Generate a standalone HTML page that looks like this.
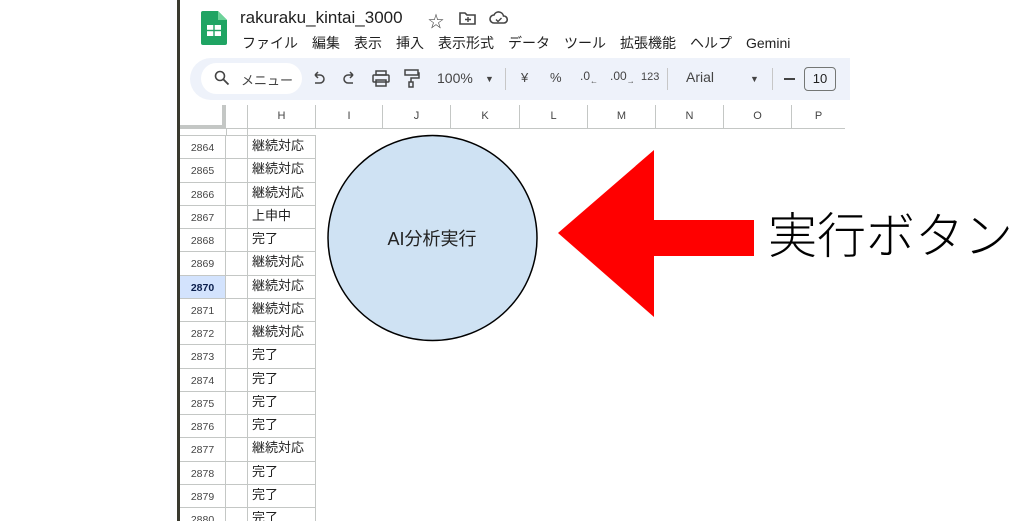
<!DOCTYPE html>
<html><head><meta charset="utf-8"><style>
*{margin:0;padding:0;box-sizing:border-box}
html,body{width:1024px;height:521px;overflow:hidden}
body{background:#fff;position:relative;font-family:"Liberation Sans","Noto Sans CJK JP",sans-serif;color:#1f1f1f}
.a{position:absolute;white-space:nowrap}
.menu span{margin-right:14px}
.tb span{position:absolute;font-size:13px;color:#444}
.colh{position:absolute;top:105px;height:23px;border-right:1px solid #c4c7c5;font-size:11px;color:#444;text-align:center;line-height:23px}
.row{position:absolute;left:180px;width:136px;height:23.3px;border-bottom:1px solid #c4c7c5}
.rn{position:absolute;left:0;width:46px;height:100%;border-right:1px solid #c4c7c5;font-size:10.5px;color:#444;text-align:center;line-height:24px}
.bl{position:absolute;left:46px;width:22px;height:100%;border-right:1px solid #c4c7c5}
.h{position:absolute;left:68px;width:68px;height:100%;border-right:1px solid #c4c7c5;font-size:13px;padding-left:4px;line-height:20px}
</style></head><body>
<div class="a" style="left:177px;top:0;width:3px;height:521px;background:#3a3a2e"></div>
<svg class="a" style="left:201px;top:11px" width="26" height="34" viewBox="0 0 26 34"><path d="M2 0h15l9 9v23a2 2 0 0 1-2 2H2a2 2 0 0 1-2-2V2a2 2 0 0 1 2-2z" fill="#1fa463"/><path d="M17 0v9h9z" fill="#6dd39a"/><rect x="6" y="14" width="14" height="11" fill="#fff"/><rect x="12.3" y="14" width="1.4" height="11" fill="#1fa463"/><rect x="6" y="18.8" width="14" height="1.4" fill="#1fa463"/></svg>
<div class="a" style="left:240px;top:8px;font-size:17px">rakuraku_kintai_3000</div>
<div class="a" style="left:428px;top:8px;font-size:16px;color:#444">☆</div>
<svg class="a" style="left:459px;top:11px" width="18" height="14"><path d="M1 2h5l2 2h8v9H1z" fill="none" stroke="#444" stroke-width="1.6"/><path d="M6 8.5h6M9 6v5" stroke="#444" stroke-width="1.4"/></svg>
<svg class="a" style="left:489px;top:10px" width="20" height="15"><path d="M5 13a4 4 0 0 1 0-8 5 5 0 0 1 9.5 1A3.5 3.5 0 0 1 15 13z" fill="none" stroke="#444" stroke-width="1.6"/><path d="M7 9.5l2 2 3.5-3.5" fill="none" stroke="#444" stroke-width="1.4"/></svg>
<div class="a menu" style="left:242px;top:34px;font-size:14px;line-height:18px"><span>ファイル</span><span>編集</span><span>表示</span><span>挿入</span><span>表示形式</span><span>データ</span><span>ツール</span><span>拡張機能</span><span>ヘルプ</span><span>Gemini</span></div>
<div class="a" style="left:190px;top:58px;width:660px;height:42px;background:#eef2fa;border-radius:21px 0 0 21px"></div>
<div class="a" style="left:201px;top:63px;width:101px;height:31px;background:#fff;border-radius:16px"></div>
<svg class="a" style="left:214px;top:70px" width="16" height="16"><circle cx="6" cy="6" r="4.5" fill="none" stroke="#444" stroke-width="1.6"/><path d="M9.5 9.5l5 5" stroke="#444" stroke-width="1.8"/></svg>
<svg class="a" style="left:312px;top:71px" width="60" height="16" fill="none" stroke="#444" stroke-width="1.5"><path d="M3 4h5a4 4 0 0 1 0 8H3M3 4l3-3M3 4l3 3"/><path d="M42 4h-5a4 4 0 0 0 0 8h5M42 4l-3-3M42 4l-3 3" transform="translate(-1,0)"/></svg>
<svg class="a" style="left:372px;top:70px" width="18" height="17" fill="none" stroke="#444" stroke-width="1.5"><rect x="4" y="1" width="10" height="4"/><rect x="1" y="5" width="16" height="7" rx="1"/><rect x="4" y="10" width="10" height="6"/></svg>
<svg class="a" style="left:404px;top:69px" width="16" height="19" fill="none" stroke="#444" stroke-width="1.5"><rect x="1" y="1" width="13" height="5"/><path d="M14 4h1v5H7v4"/><rect x="5" y="13" width="4" height="5"/></svg>
<div class="tb">
<span style="left:241px;top:70px">メニュー</span>
<span style="left:437px;top:70px;font-size:14px">100%</span>
<span style="left:485px;top:74px;font-size:9px">▼</span>
<span style="left:521px;top:70px">¥</span>
<span style="left:550px;top:70px">%</span>
<span style="left:580px;top:69px;font-size:12px">.0<sub style="font-size:8px">←</sub></span>
<span style="left:610px;top:69px;font-size:12px">.00<sub style="font-size:8px">→</sub></span>
<span style="left:641px;top:71px;font-size:11px">123</span>
<span style="left:686px;top:69px;font-size:14px">Arial</span>
<span style="left:750px;top:74px;font-size:9px">▼</span>
</div>
<div class="a" style="left:784px;top:78px;width:11px;height:2px;background:#444"></div>
<div class="a" style="left:505px;top:68px;width:1px;height:22px;background:#c7c7c7"></div>
<div class="a" style="left:667px;top:68px;width:1px;height:22px;background:#c7c7c7"></div>
<div class="a" style="left:772px;top:68px;width:1px;height:22px;background:#c7c7c7"></div>
<div class="a" style="left:804px;top:67px;width:32px;height:24px;border:1px solid #747775;border-radius:4px;font-size:13px;text-align:center;line-height:22px">10</div>
<!-- grid header -->
<div class="a" style="left:180px;top:105px;width:665px;height:24px;border-bottom:1px solid #c4c7c5"></div>
<div class="a" style="left:180px;top:105px;width:46px;height:24px;border-right:4px solid #c4c7c5;border-bottom:4px solid #c4c7c5"></div>
<div class="colh" style="left:226px;width:22px"></div>
<div class="colh" style="left:248px;width:68px">H</div>
<div class="colh" style="left:316px;width:67px">I</div>
<div class="colh" style="left:383px;width:68px">J</div>
<div class="colh" style="left:451px;width:69px">K</div>
<div class="colh" style="left:520px;width:68px">L</div>
<div class="colh" style="left:588px;width:68px">M</div>
<div class="colh" style="left:656px;width:68px">N</div>
<div class="colh" style="left:724px;width:68px">O</div>
<div class="colh" style="left:792px;width:53px;border-right:none">P</div>
<div class="a" style="left:180px;top:129px;width:136px;height:7px;border-bottom:1px solid #c4c7c5"><div style="position:absolute;left:46px;width:22px;height:7px;border-right:1px solid #c4c7c5;border-left:1px solid #c4c7c5"></div></div>
<div id="rows"></div>
<script>
var d=["継続対応","継続対応","継続対応","上申中","完了","継続対応","継続対応","継続対応","継続対応","完了","完了","完了","完了","継続対応","完了","完了","完了"],h="";
for(var i=0;i<17;i++){var t=136+i*23.25;var s=i==6?' style="background:#d3e3fd;color:#0b1f4d;font-weight:bold"':'';
h+='<div class="row" style="top:'+t+'px"><div class="rn"'+s+'>'+(2864+i)+'</div><div class="bl"></div><div class="h">'+d[i]+'</div></div>';}
document.getElementById('rows').innerHTML=h;
</script>
<svg class="a" style="left:0;top:0" width="1024" height="521">
<ellipse cx="432.5" cy="238" rx="104.5" ry="102.5" fill="#cfe2f3" stroke="#000" stroke-width="1.5"/>
<text x="432" y="245" font-size="18" text-anchor="middle" font-family="Liberation Sans,Noto Sans CJK JP,sans-serif" fill="#222">AI分析実行</text>
<polygon points="558,233 654,150 654,220 754,220 754,256 654,256 654,317" fill="#ff0000"/>
</svg>
<div class="a" style="left:768px;top:200px;font-size:49px;line-height:66px;font-family:'Noto Sans CJK JP',sans-serif;font-weight:300;color:#000">実行ボタン</div>
</body></html>
